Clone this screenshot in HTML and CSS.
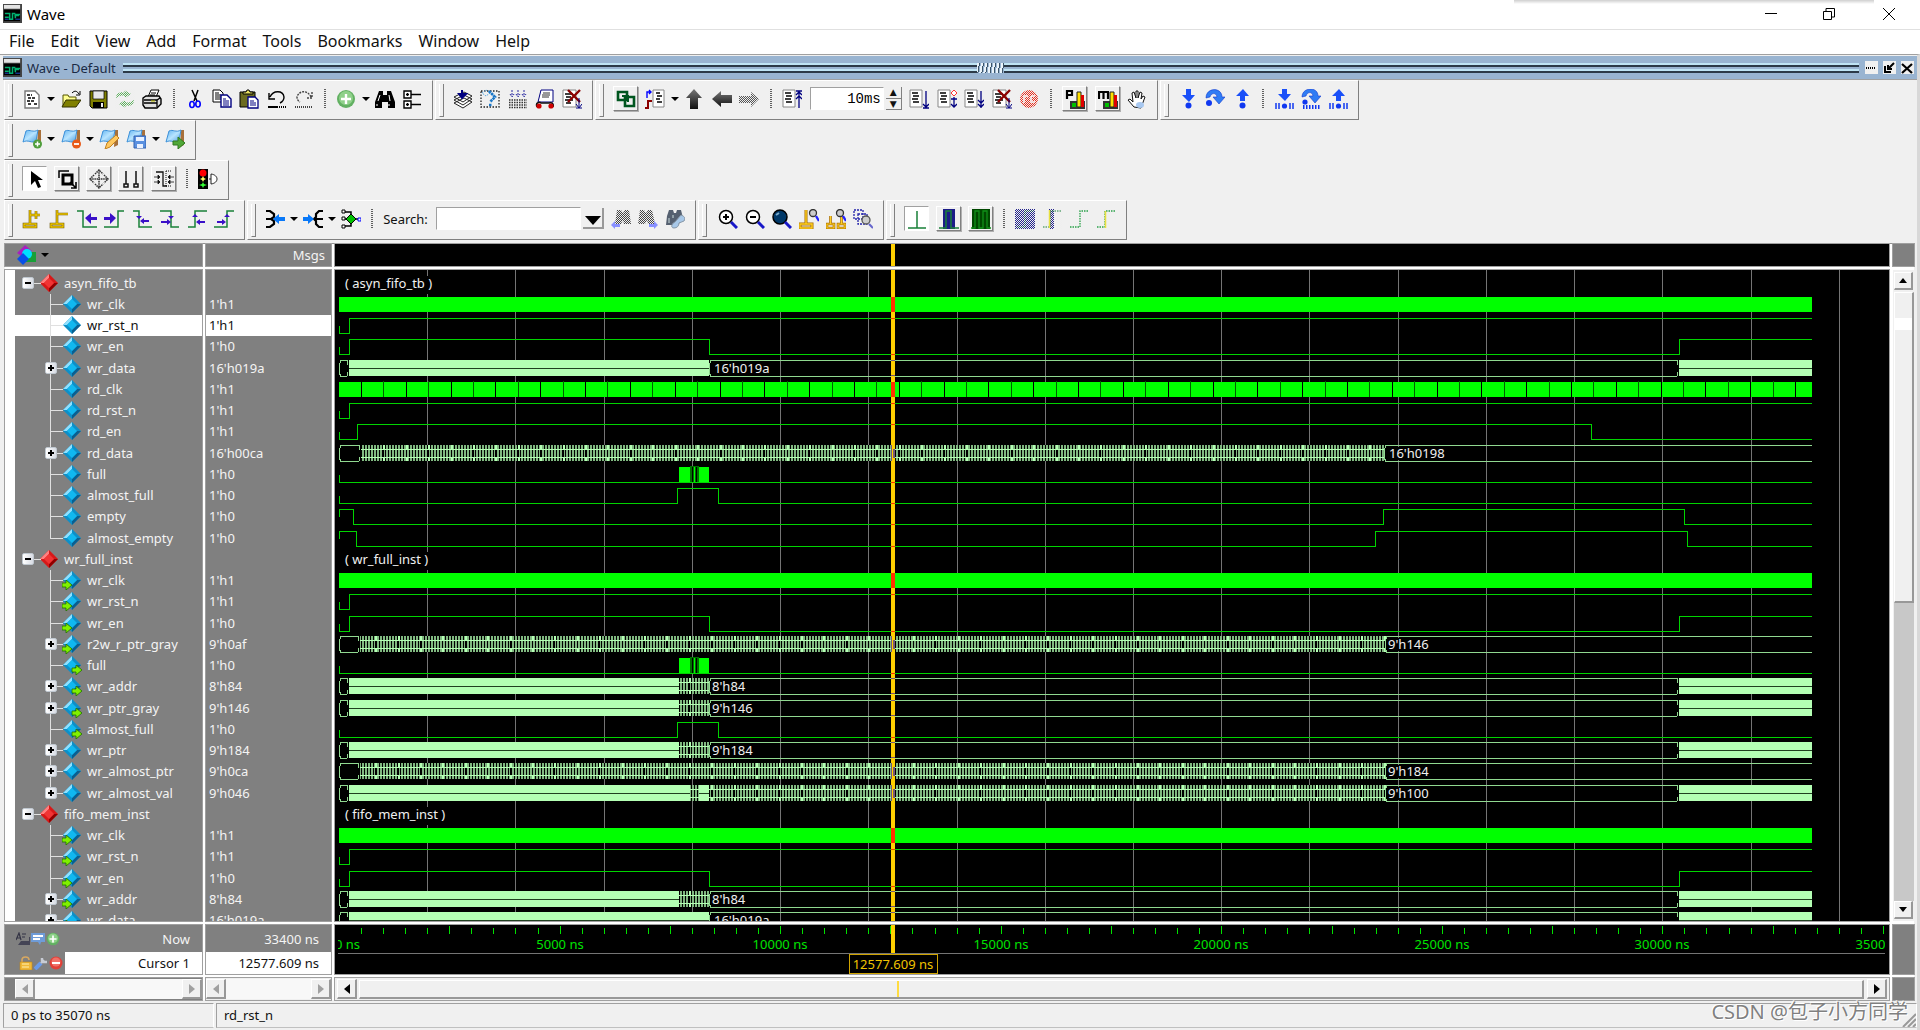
FILE: index.html
```html
<!DOCTYPE html>
<html lang="en">
<head>
<meta charset="utf-8">
<title>Wave</title>
<link rel="stylesheet" href="styles.css">
</head>
<body>
<svg class="sprite" aria-hidden="true">
  <defs>
    <pattern id="chk" width="2" height="2" patternUnits="userSpaceOnUse"><path d="M0 0h1v1h-1zM1 1h1v1h-1z" fill="#efefef"/></pattern>
    <linearGradient id="gArrow" x2="0" y2="1"><stop offset="0" stop-color="#777"/><stop offset="1" stop-color="#111"/></linearGradient>
    <linearGradient id="gFlag" x2="1" y2="1"><stop offset="0" stop-color="#5cb0f0"/><stop offset=".5" stop-color="#b8e4ff"/><stop offset="1" stop-color="#4a9ee0"/></linearGradient>
  </defs>
  <symbol id="app" viewBox="0 0 20 20"><path d="M0 0h20v20h-20z" fill="#444"/><path d="M1 1h17v4h-17z" fill="#e4e4e4"/><path d="M1 6h17v12h-17z" fill="#000"/><path d="M2 10h5v6h3v-6h3M13 15v-4h5M2 14h4M12 12h5" stroke="#00b070" fill="none" stroke-width="1.6"/><path d="M2 16h4M13 16h5" stroke="#2050d0"/></symbol>
  <symbol id="doc" viewBox="0 0 20 20"><path d="M3 2h10l4 4v13h-14z" fill="#fff" stroke="#777" stroke-width="1.4"/><path d="M5 6h5M6 9h7M5 12h8M6 15h4M12 15h3" stroke="#000" stroke-width="1.5" stroke-dasharray="3 1"/></symbol>
  <symbol id="open" viewBox="0 0 20 20"><path d="M2 17v-11h5l1 2h7v3" fill="#ffff90" stroke="#555500"/><path d="M1 18l4-7h15l-5 7z" fill="#808000" stroke="#333300"/><path d="M11 4c3-3 5-2 7 1M19 2v4h-4" fill="none" stroke="#000"/></symbol>
  <symbol id="save" viewBox="0 0 20 20"><path d="M2 2h17v17h-15l-2-2z" fill="#808000" stroke="#000"/><path d="M5 2h11v8h-11z" fill="#e8e8e8" stroke="#000" stroke-width=".7"/><path d="M5 13h11v6h-11z" fill="#000"/><path d="M13 14h2v4h-2z" fill="#eee"/></symbol>
  <symbol id="reload" viewBox="0 0 20 20"><path d="M1 9c0-5 5-7 9-5l-1-3 7 4-6 4v-2c-4-1-6 0-9 2zM19 11c0 5-5 7-9 5l1 3-7-4 6-4v2c4 1 6 0 9-2z" fill="#5aae5a"/><path d="M0 0h20v20h-20z" fill="url(#chk)"/></symbol>
  <symbol id="print" viewBox="0 0 20 20"><path d="M6 8l3-7h8l-3 7z" fill="#fff" stroke="#000"/><path d="M9 4h5M8 6h5" stroke="#000"/><path d="M1 9l3-2h13l2 3v5l-4 4h-12l-2-3z" fill="#e0e0e0" stroke="#000" stroke-width="1.4"/><path d="M2 11h13l3-2M2 14h13M15 11v7" stroke="#000" fill="none" stroke-width="1.3"/><path d="M9 12h4" stroke="#c0c000"/></symbol>
  <symbol id="cut" viewBox="0 0 20 20"><path d="M7 1l5 11M13 1l-4 11" stroke="#000" stroke-width="1.5"/><g fill="none" stroke="#0000ff" stroke-width="1.6"><ellipse cx="7" cy="15.500" rx="2.200" ry="3"/><ellipse cx="13" cy="15" rx="2.200" ry="3"/></g></symbol>
  <symbol id="copy" viewBox="0 0 20 20"><path d="M1 1h7l3 3v9h-10z" fill="#fff" stroke="#000"/><path d="M3 4h4M3 6h6M3 8h6M3 10h6" stroke="#000"/><path d="M9 6h6l4 4v8h-10z" fill="#fff" stroke="#000080" stroke-width="1.400"/><path d="M11 10h3M11 12h6M11 14h6M11 16h6" stroke="#000080"/></symbol>
  <symbol id="paste" viewBox="0 0 20 20"><path d="M1 3h15v15h-15z" fill="#6b6b20" stroke="#000"/><path d="M4 5v-2h3l1-2h2l1 2h3v2z" fill="#e8e060" stroke="#000"/><path d="M9 8h7l3 3v8h-10z" fill="#fff" stroke="#000080" stroke-width="1.300"/><path d="M11 12h4M11 14h6M11 16h6" stroke="#000080"/></symbol>
  <symbol id="undo" viewBox="0 0 20 20"><path d="M3 8c3-7 13-7 14 0 0 3-2 5-4 6M2 4v6h6" fill="none" stroke="#000" stroke-width="1.400"/><path d="M1 18h10" stroke="#000" stroke-width="2"/><path d="M12 18h7" stroke="#000" stroke-width="2" stroke-dasharray="1 1"/></symbol>
  <symbol id="redo" viewBox="0 0 20 20"><path d="M17 8c-3-7-12-7-14 0 0 2 1 4 3 5M18 3v6h-6" fill="none" stroke="#444" stroke-width="1.400" stroke-dasharray="2 1"/><path d="M1 18h18" stroke="#444" stroke-width="2" stroke-dasharray="1 1"/></symbol>
  <symbol id="plus" viewBox="0 0 20 20"><circle cx="10" cy="10" r="9" fill="#62b062"/><circle cx="10" cy="9" r="7" fill="#8fd08a"/><path d="M10 5v10M5 10h10" stroke="#fff" stroke-width="2.400"/></symbol>
  <symbol id="bino" viewBox="0 0 20 20"><path d="M4 2h4v4h4v-4h4l4 11v6h-7v-6h-6v6h-7v-6z" fill="#000"/><path d="M5 6l-2 6M14 6l1 6M2 15v2M14 15v2" stroke="#fff"/></symbol>
  <symbol id="tree" viewBox="0 0 20 20"><path d="M2 2h7v7h-7zM2 12h7v7h-7z" fill="#fff" stroke="#000" stroke-width="1.400"/><path d="M4 5.500h3M5.500 4v3M4 15.500h3M5.500 14v3M9 5.500h10M9 15.500h10" stroke="#000" stroke-width="1.300"/></symbol>
  <symbol id="stack" viewBox="0 0 20 20"><path d="M1 14l9 5 9-6-8-4zM1 11l9 5 9-6-8-4zM1 8l9 5 9-6-8-4z" fill="#fff" stroke="#222"/><path d="M9 1v6M6 5l3 4 4-4z" stroke="#000080" stroke-width="2" fill="#000080"/></symbol>
  <symbol id="ask" viewBox="0 0 20 20"><path d="M1 2h18v16h-18z" fill="none" stroke="#222" stroke-width="1.300" stroke-dasharray="1.500 1.500"/><path d="M2 4l4-3 4 3-4 3z" fill="none" stroke="#5aa8e0" stroke-dasharray="1.500 1"/><path d="M9 2l6 6-5 5M9 16h3" fill="none" stroke="#1c78c8" stroke-width="2.600" stroke-dasharray="2.500 .6"/></symbol>
  <symbol id="grid" viewBox="0 0 20 20"><path d="M1 11h18M1 13.500h18M1 16h18M1 18.500h18" stroke="#333" stroke-width="1.300" stroke-dasharray="1.500 1"/><path d="M4 1v6M10 1v6M16 1v6M2 5l2 3 2-3M8 5l2 3 2-3M14 5l2 3 2-3" stroke="#2828a0" fill="none" stroke-dasharray="2 1"/></symbol>
  <symbol id="carDoc" viewBox="0 0 20 20"><path d="M6 1h12v12h-15z" fill="#fff" stroke="#000080"/><path d="M8 4h7M7 6h8M7 8h7" stroke="#333"/><path d="M2 18c-2-5 3-5 4-4h8c3-1 5 1 4 4" fill="none" stroke="#111" stroke-width="1.500"/><circle cx="4" cy="17" r="2.600" fill="#d00000"/><circle cx="16" cy="17" r="2.600" fill="#d00000"/></symbol>
  <symbol id="runX" viewBox="0 0 20 20"><path d="M1 1h13v17h-13z" fill="#fff" stroke="#888"/><path d="M3 5h8M4 8h5M3 11h8M4 14h5" stroke="#000" stroke-width="1.500"/><path d="M6 1l12 12M18 1l-12 12" stroke="#8b0000" stroke-width="2.400"/><path d="M17 9v9M14 15l3 4 3-4M14 19h6" stroke="#000080" fill="none"/></symbol>
  <symbol id="link" viewBox="0 0 20 20"><path d="M2 3h9v8h-9zM9 8h9v9h-9z" fill="none" stroke="#00561f" stroke-width="2.600"/><path d="M6 7h6v6" fill="none" stroke="#00561f" stroke-width="2"/></symbol>
  <symbol id="sigDoc" viewBox="0 0 20 20"><path d="M8 1h11v17h-11z" fill="#fff" stroke="#888"/><path d="M11 4h4M12 7h5M11 10h4M12 13h5" stroke="#000" stroke-width="1.500"/><path d="M2 9v-6h4M4 1l2 2-2 2" stroke="#0000ff" fill="none" stroke-width="1.400"/><path d="M0 19h3v-7h4" stroke="#8b0000" fill="none" stroke-width="2"/></symbol>
  <symbol id="up" viewBox="0 0 20 20"><path d="M10 0l8 9h-4v11h-8v-11h-4z" fill="url(#gArrow)"/></symbol>
  <symbol id="left" viewBox="0 0 20 20"><path d="M0 10l9-8v4h11v8h-11v4z" fill="url(#gArrow)"/></symbol>
  <symbol id="right" viewBox="0 0 20 20"><path d="M20 10l-8-7v4h-12v7h12v4z" fill="#555"/><path d="M0 0h20v20h-20z" fill="url(#chk)"/></symbol>
  <symbol id="restart" viewBox="0 0 20 20"><path d="M1 1h12v17h-12z" fill="#fff" stroke="#888"/><path d="M3 4h6M4 7h6M3 10h6M4 13h6" stroke="#000" stroke-width="1.500"/><path d="M17 2v17M14 2h6M14 6l3-3 3 3M14 10l3-3 3 3" stroke="#000080" fill="none" stroke-width="1.300"/></symbol>
  <symbol id="run1" viewBox="0 0 20 20"><path d="M1 1h12v17h-12z" fill="#fff" stroke="#888"/><path d="M3 4h6M4 7h6M3 10h6M4 13h6" stroke="#000" stroke-width="1.500"/><path d="M17 2v16M14 15l3 3 3-3M14 19h6" stroke="#000080" fill="none" stroke-width="1.300"/></symbol>
  <symbol id="run2" viewBox="0 0 20 20"><path d="M1 1h12v17h-12z" fill="#fff" stroke="#888"/><path d="M3 4h6M4 7h6M3 10h6M4 13h6" stroke="#000" stroke-width="1.500"/><path d="M17 8v10M14 10h6M14 15l3 3 3-3" stroke="#000080" fill="none" stroke-width="1.300"/><path d="M17 1l3 3-3 3-3-3z" fill="#fff" stroke="#f33"/></symbol>
  <symbol id="run3" viewBox="0 0 20 20"><path d="M1 1h12v17h-12z" fill="#fff" stroke="#888"/><path d="M3 4h6M4 7h6M3 10h6M4 13h6" stroke="#000" stroke-width="1.500"/><path d="M17 2v17M14 11l3 3 3-3M14 15l3 3 3-3" stroke="#000080" fill="none" stroke-width="1.300"/></symbol>
  <symbol id="stop" viewBox="0 0 20 20"><circle cx="10" cy="10" r="9" fill="#e83020"/><path d="M5 7h4M5 7v7M12 7h4M12 7v6h4" stroke="#fff" stroke-width="1.500" fill="none"/><path d="M0 0h20v20h-20z" fill="url(#chk)"/></symbol>
  <symbol id="profP" viewBox="0 0 20 20"><path d="M2 10v-8h5v4h-5" stroke="#000" stroke-width="2.200" fill="none"/><path d="M5 12h15v8h-15z" fill="#333"/><path d="M7 14h4v4h-4z" fill="#00c000"/><path d="M12 3h4v15h-4z" fill="#ffe000" stroke="#222"/><path d="M16 6h3v12h-3z" fill="#e00000"/></symbol>
  <symbol id="profM" viewBox="0 0 20 20"><path d="M1 10v-7h9v7M5.500 3v7" stroke="#000" stroke-width="2.200" fill="none"/><path d="M5 12h15v8h-15z" fill="#333"/><path d="M7 14h4v4h-4z" fill="#00c000"/><path d="M12 3h4v15h-4z" fill="#ffe000" stroke="#222"/><path d="M16 6h3v12h-3z" fill="#e00000"/></symbol>
  <symbol id="hand" viewBox="0 0 20 20"><path d="M7 18l-6-7 2-1 3 3-1-9 2-1 2 6v-7h2v7l2-6 2 1-1 6 2-3 2 1-3 8-1 3z" fill="#fff" stroke="#111"/><ellipse cx="13" cy="16" rx="4" ry="3" fill="#a8c8f0"/></symbol>
  <symbol id="stepIn" viewBox="0 0 20 20"><path d="M8 0h5v6h4l-6 7-7-7h4z" fill="#1a50f8"/><circle cx="10.500" cy="16.500" r="3" fill="#1038f0"/></symbol>
  <symbol id="stepOver" viewBox="0 0 20 20"><path d="M1 9c0-11 16-11 16-1h3l-6 7-6-7h4c-1-5-6-4-7 0z" fill="#2f7cf4" stroke="#1038d0" stroke-width=".6"/><circle cx="4" cy="14" r="3" fill="#1038f0"/></symbol>
  <symbol id="stepOut" viewBox="0 0 20 20"><path d="M8 12h5v-5h4l-6-7-7 7h4z" fill="#1a50f8"/><circle cx="10.500" cy="16.500" r="3" fill="#1038f0"/></symbol>
  <symbol id="inBars" viewBox="0 0 20 20"><path d="M8 0h5v5h4l-6 7-7-7h4z" fill="#1a50f8"/><circle cx="10.500" cy="17" r="2.600" fill="#1038f0"/><path d="M2 14v6M5 14v6M16 14v6M19 14v6" stroke="#1038f0" stroke-width="1.500"/></symbol>
  <symbol id="overBars" viewBox="0 0 20 20"><path d="M1 8c0-10 16-11 16-1h3l-6 7-6-7h4c-1-5-6-4-7 0z" fill="#2f7cf4" stroke="#1038d0" stroke-width=".6"/><circle cx="4" cy="13" r="2.600" fill="#1038f0"/><path d="M2 18h18" stroke="#1038f0" stroke-width="4" stroke-dasharray="1.500 1.500"/></symbol>
  <symbol id="outBars" viewBox="0 0 20 20"><path d="M8 12h5v-5h4l-6-7-7 7h4z" fill="#1a50f8"/><circle cx="10.500" cy="17" r="2.600" fill="#1038f0"/><path d="M2 14v6M5 14v6M16 14v6M19 14v6" stroke="#1038f0" stroke-width="1.500"/></symbol>
  <symbol id="flag" viewBox="0 0 20 20"><path d="M16 1h3v15l-4 2z" fill="#a8703a"/><path d="M4 2c4-2 7 2 12-1l-2 11c-4 3-8-2-13 1z" fill="url(#gFlag)" stroke="#3c90d8"/></symbol>
  <symbol id="flagAdd" viewBox="0 0 20 20"><use href="#flag"/><circle cx="15.500" cy="15" r="4.500" fill="#4f9e3c"/><path d="M15.500 12.500v5M13 15h5" stroke="#fff" stroke-width="1.500"/></symbol>
  <symbol id="flagDel" viewBox="0 0 20 20"><use href="#flag"/><circle cx="15.500" cy="15" r="4.500" fill="#e85a18"/><path d="M13 15h5" stroke="#fff" stroke-width="1.800"/></symbol>
  <symbol id="flagEdit" viewBox="0 0 20 20"><use href="#flag"/><path d="M6 20l2-6 9-8 3 3-9 9z" fill="#ffc860" stroke="#c08020"/></symbol>
  <symbol id="flagSave" viewBox="0 0 20 20"><use href="#flag"/><path d="M8 7h12v12h-12z" fill="#5a90e0" stroke="#3060b0"/><path d="M10 8h8v4h-8zM11 15h6v4h-6z" fill="#e8f0ff"/></symbol>
  <symbol id="flagGo" viewBox="0 0 20 20"><use href="#flag"/><path d="M8 12h5v-4l7 6-7 6v-4h-5z" fill="#50a838" stroke="#307820"/></symbol>
  <symbol id="cursor" viewBox="0 0 20 20"><path d="M6 2v14l4-4 3 7 3-1-3-7h5z" fill="#000"/></symbol>
  <symbol id="zoomBox" viewBox="0 0 20 20"><path d="M2 9v-7h10" fill="none" stroke="#000" stroke-width="1.500"/><path d="M6 6h9v9h-9z" fill="none" stroke="#000" stroke-width="3"/><path d="M14 19h5v-6M13 13l6 6" stroke="#000" stroke-width="1.600" fill="none"/></symbol>
  <symbol id="pan" viewBox="0 0 20 20"><path d="M10 1v18M1 10h18M6 5l4-4 4 4M6 15l4 4 4-4M5 6l-4 4 4 4M15 6l4 4-4 4" fill="none" stroke="#333" stroke-width="1.500" stroke-dasharray="1.500 .7"/></symbol>
  <symbol id="twoCur" viewBox="0 0 20 20"><path d="M5 2v13M15 2v13M3 15h4v3h-4zM13 15h4v3h-4z" fill="none" stroke="#111" stroke-width="1.500"/></symbol>
  <symbol id="editW" viewBox="0 0 20 20"><path d="M2 3h7v14h4" fill="none" stroke="#111" stroke-width="1.300"/><path d="M0 8h5M0 13h5M20 8h-5M20 13h-5M4 6v4l2-2zM4 11v4l2-2zM16 6v4l-2-2zM16 11v4l-2-2z" stroke="#111" fill="#111" stroke-width=".8"/><path d="M12 2h5M12 2v16M12 17h6" stroke="#111" stroke-dasharray="1 1"/></symbol>
  <symbol id="traffic" viewBox="0 0 20 20"><path d="M0 0h10v20h-10z" fill="#000"/><circle cx="5" cy="4" r="3.500" fill="#f00"/><path d="M5 7l1 2 2 1-2 1-1 2-1-2-2-1 2-1z" fill="#ff6"/><path d="M5 13l1 2 3 1-3 1-1 2-1-2-3-1 3-1z" fill="#3f3"/><path d="M11 10h2M13 5c8 1 8 9 0 10z" fill="#fff" stroke="#222"/></symbol>
  <symbol id="curAdd" viewBox="0 0 20 20"><path d="M2 15h12v3h-12zM8 15v-14M8 6h10M14 2v8" fill="none" stroke="#6a5400" stroke-width="2.600"/><path d="M2 15h12v3h-12zM8 15v-14M8 6h10M14 2v8" fill="none" stroke="#f0c800" stroke-width="1.400"/></symbol>
  <symbol id="curDel" viewBox="0 0 20 20"><path d="M2 15h12v3h-12zM8 15v-14M8 5h11" fill="none" stroke="#6a5400" stroke-width="2.600"/><path d="M2 15h12v3h-12zM8 15v-14M8 5h11" fill="none" stroke="#f0c800" stroke-width="1.400"/></symbol>
  <symbol id="prevT" viewBox="0 0 20 20"><path d="M0 2h6v16h14" fill="none" stroke="#188038" stroke-width="1.500"/><path d="M8 9l6-5v4h6v3h-6v4z" fill="#3a10c8"/></symbol>
  <symbol id="nextT" viewBox="0 0 20 20"><path d="M0 18h14v-16h6" fill="none" stroke="#188038" stroke-width="1.500"/><path d="M12 9l-6-5v4h-6v3h6v4z" fill="#3a10c8"/></symbol>
  <symbol id="prevF" viewBox="0 0 20 20"><path d="M1 2h6v16h13" fill="none" stroke="#188038" stroke-width="1.500"/><path d="M4 7h6l-3 3zM8 12l4-3v2h5v2h-5v2z" fill="#3a10c8"/></symbol>
  <symbol id="nextF" viewBox="0 0 20 20"><path d="M1 2h11v16h8" fill="none" stroke="#188038" stroke-width="1.500"/><path d="M9 7h6l-3 3zM12 13l-4-3v2h-6v2h6v2z" fill="#3a10c8"/></symbol>
  <symbol id="prevR" viewBox="0 0 20 20"><path d="M1 18h7v-16h12" fill="none" stroke="#188038" stroke-width="1.500"/><path d="M5 8h6l-3-3zM9 13l4-3v2h5v2h-5v2z" fill="#3a10c8"/></symbol>
  <symbol id="nextR" viewBox="0 0 20 20"><path d="M0 18h13v-16h7" fill="none" stroke="#188038" stroke-width="1.500"/><path d="M10 8h6l-3-3zM12 13l-4-3v2h-5v2h5v2z" fill="#3a10c8"/></symbol>
  <symbol id="joinL" viewBox="0 0 20 20"><path d="M1 2h4l4 3v3l-3 2 3 2v3l-4 3h-4M1 10h6" fill="none" stroke="#000" stroke-width="2.200"/><path d="M8 10l6-5v3h6v4h-6v3z" fill="#0878f8"/></symbol>
  <symbol id="joinR" viewBox="0 0 20 20"><path d="M20 2h-4l-3 3v3l-2 2 2 2v3l3 3h4M12 10h8" fill="none" stroke="#000" stroke-width="2.200"/><path d="M11 10l-6-5v3h-5v4h5v3z" fill="#0878f8"/></symbol>
  <symbol id="joinAll" viewBox="0 0 20 20"><path d="M3 3h7v14h-7M3 10h14" fill="none" stroke="#000" stroke-width="1.500"/><path d="M1 1h3v3h-3zM1 8h3v3h-3zM1 16h3v3h-3z" fill="#fff" stroke="#000"/><path d="M10 5l5 5-5 5-5-5z" fill="#00c000" stroke="#000"/><path d="M17 9h3v3h-3z" fill="#fff" stroke="#00f"/></symbol>
  <symbol id="binoL" viewBox="0 0 20 20"><path d="M6 1h4l2 3 2-3h4l2 14h-7l-1-4-2 4h-6z" fill="#444"/><path d="M0 0h20v20h-20z" fill="url(#chk)"/><path d="M0 16l4-4v3h5v3h-5v2z" fill="#8890ff"/></symbol>
  <symbol id="binoR" viewBox="0 0 20 20"><path d="M2 1h4l2 3 2-3h4l3 14h-7l-1-4-2 4h-7z" fill="#444"/><path d="M0 0h20v20h-20z" fill="url(#chk)"/><path d="M20 16l-4-4v3h-5v3h5v2z" fill="#8890ff"/></symbol>
  <symbol id="binoW" viewBox="0 0 20 20"><path d="M4 1h4l1 3h2l1-3h4l2 8-5 7h-12l1-9z" fill="#556070"/><path d="M4 9v5M8 6v3" stroke="#cdd"/><path d="M9 19c-4 0-2-5 1-6l6-7c3 1 5 3 3 6l-5 2c0 3-2 5-5 5z" fill="#a8c8e8" stroke="#8898a8"/></symbol>
  <symbol id="zin" viewBox="0 0 20 20"><circle cx="8" cy="8" r="6.500" fill="#fff" stroke="#000" stroke-width="1.500"/><path d="M8 5v6M5 8h6" stroke="#000" stroke-width="2"/><path d="M13 13l6 6" stroke="#1818c8" stroke-width="3"/></symbol>
  <symbol id="zout" viewBox="0 0 20 20"><circle cx="8" cy="8" r="6.500" fill="#fff" stroke="#000" stroke-width="1.500"/><path d="M5 8h6" stroke="#000" stroke-width="2"/><path d="M13 13l6 6" stroke="#1818c8" stroke-width="3"/></symbol>
  <symbol id="zfull" viewBox="0 0 20 20"><circle cx="8" cy="8" r="7" fill="#003868" stroke="#000" stroke-width="1.500"/><path d="M4 6l3-2" stroke="#7ac" stroke-width="2"/><path d="M13 13l6 6" stroke="#1818c8" stroke-width="3"/></symbol>
  <symbol id="zcur" viewBox="0 0 20 20"><path d="M1 15h12v4h-12zM7 15v-14" fill="none" stroke="#a86c00" stroke-width="3"/><path d="M1 15h12v4h-12zM7 15v-14" fill="none" stroke="#ffd020" stroke-width="1.400"/><circle cx="14" cy="4" r="3.500" fill="#ccc" stroke="#333" stroke-width="1.300"/><path d="M17 7l3 5" stroke="#22f" stroke-width="2.400"/></symbol>
  <symbol id="ztwo" viewBox="0 0 20 20"><path d="M1 15h7v4h-7zM4.500 15v-8M12 15h7v4h-7zM15.500 15v-8" fill="none" stroke="#a86c00" stroke-width="2.600"/><path d="M1 15h7v4h-7zM4.500 15v-8M12 15h7v4h-7zM15.500 15v-8" fill="none" stroke="#ffd020" stroke-width="1.200"/><circle cx="14" cy="4" r="3.500" fill="#ccc" stroke="#333" stroke-width="1.300"/><path d="M17 7l3 5" stroke="#22f" stroke-width="2.400"/></symbol>
  <symbol id="zsel" viewBox="0 0 20 20"><path d="M1 1h9v9h-9zM5 5h9v10h-9z" fill="none" stroke="#22a" stroke-width="1.300" stroke-dasharray="2 1"/><circle cx="13" cy="11" r="4" fill="#ccc" stroke="#555" stroke-width="1.300"/><path d="M16 15l4 4" stroke="#66c" stroke-width="2.200"/></symbol>
  <symbol id="exp1" viewBox="0 0 20 20"><path d="M1 19h18M10 19v-17" stroke="#188038" fill="none" stroke-width="1.500"/></symbol>
  <symbol id="exp2" viewBox="0 0 20 20"><path d="M4 0h12v20h-12z" fill="#1c1c88"/><path d="M0 19h7v-17h5v17h8" stroke="#188038" fill="none" stroke-width="1.500"/></symbol>
  <symbol id="exp3" viewBox="0 0 20 20"><path d="M1 0h18v20h-18z" fill="#004800"/><path d="M0 19h4v-17h4v17h4v-17h4v17h4" stroke="#109018" fill="none" stroke-width="1.300"/></symbol>
  <symbol id="m1" viewBox="0 0 20 20"><path d="M0 0h20v20h-20z" fill="#24248c"/><path d="M2 18h8v-16h9" stroke="#188038" fill="none"/><path d="M0 0h20v20h-20z" fill="url(#chk)"/></symbol>
  <symbol id="m2" viewBox="0 0 20 20"><path d="M7 0h5v20h-5z" fill="#24248c"/><path d="M0 0h20v20h-20z" fill="url(#chk)"/><path d="M1 18h7v-16h12" stroke="#188038" fill="none" stroke-dasharray="1.500 1"/><path d="M7.500 1v18" stroke="#e8e040" stroke-width="1.500"/></symbol>
  <symbol id="m3" viewBox="0 0 20 20"><path d="M1 18h10v-16h8" stroke="#28a048" fill="none" stroke-dasharray="1.500 1" stroke-width="1.300"/></symbol>
  <symbol id="m4" viewBox="0 0 20 20"><path d="M1 18h8v-16h10" stroke="#28a048" fill="none" stroke-dasharray="1.500 1" stroke-width="1.300"/><path d="M9.500 2v17" stroke="#e8e040" stroke-width="1.500"/></symbol>
  <symbol id="gemBlue" viewBox="0 0 20 20"><path d="M10 1l9 9-9 9-9-9z" fill="#0d8fc8"/><path d="M1 10l9-9v4l-5 5z" fill="#8fe0ff"/><path d="M10 19l9-9h-4l-5 5z" fill="#0a5f90"/><path d="M10 5l5 5-5 5-5-5z" fill="#10b8f0"/></symbol>
  <symbol id="gemRed" viewBox="0 0 20 20"><path d="M10 1l9 9-9 9-9-9z" fill="#d81818"/><path d="M1 10l9-9v4l-5 5z" fill="#ff8080"/><path d="M10 19l9-9h-4l-5 5z" fill="#900000"/><path d="M10 5l5 5-5 5-5-5z" fill="#f03434"/></symbol>
  <symbol id="gemIn" viewBox="0 0 20 20"><use href="#gemBlue"/><path d="M0 13h4v-3l6 5-6 5v-3h-4z" fill="#80f000" stroke="#207000" stroke-width=".8"/></symbol>
  <symbol id="gemOut" viewBox="0 0 20 20"><use href="#gemBlue"/><path d="M10 13h4v-3l6 5-6 5v-3h-4z" fill="#80f000" stroke="#207000" stroke-width=".8"/></symbol>
  <symbol id="shapes" viewBox="0 0 20 20"><path d="M1 8l8-8 7 6-8 7z" fill="#a820c0"/><path d="M10 7h10v10h-10z" fill="#18a038"/><circle cx="11" cy="9" r="5" fill="#00e0ff"/><path d="M7 8l6 6-6 6-6-6z" fill="#0850e8"/></symbol>
  <symbol id="abc" viewBox="0 0 14 14"><path d="M0 8l3-7 2 7M1 6h4M6 2h4M6 5h3" stroke="#334" fill="none" stroke-width="1.200"/><path d="M2 13l3-4h8v-4h1v8z" fill="#445"/></symbol>
  <symbol id="note" viewBox="0 0 14 14"><path d="M0 1h14v9h-4l-1 3-2-3h-7z" fill="#6f9cd8"/><path d="M2 4h10M2 7h7" stroke="#fff" stroke-width="1.800"/></symbol>
  <symbol id="lock" viewBox="0 0 14 14"><path d="M3 7v-3c0-4 7-4 7 0" fill="none" stroke="#d8a860" stroke-width="1.600"/><path d="M1 6h12v8h-12z" fill="#f0b838" stroke="#c08818" stroke-width=".6"/><path d="M3 8h7M3 11h7" stroke="#fff0b0"/></symbol>
  <symbol id="wrench" viewBox="0 0 14 14"><path d="M1 13l6-6" stroke="#6a9ae8" stroke-width="4"/><path d="M7 7l3-3M8 2v4h5" stroke="#c8ccd4" stroke-width="2.400" fill="none"/></symbol>
  <symbol id="minus" viewBox="0 0 14 14"><circle cx="7" cy="7" r="6.500" fill="#e04038"/><circle cx="7" cy="6" r="4.500" fill="#f07068"/><path d="M3 7h8" stroke="#fff" stroke-width="2"/></symbol>
</svg>

<header class="titlebar">
  <svg class="app-icon"><use href="#app"/></svg>
  <h1>Wave</h1>
  <div class="win-shadow"></div>
  <div class="win-buttons">
    <button aria-label="Minimize"><svg viewBox="0 0 12 12"><path d="M0 5.500h12"/></svg></button>
    <button aria-label="Restore"><svg viewBox="0 0 12 12"><path d="M.5 3.500h8v8h-8zM3 3v-2.500h8.500v8.500h-2.500"/></svg></button>
    <button aria-label="Close"><svg viewBox="0 0 12 12"><path d="M0 0l12 12M12 0l-12 12"/></svg></button>
  </div>
</header>

<nav class="menubar">
  <button>File</button><button>Edit</button><button>View</button><button>Add</button><button>Format</button><button>Tools</button><button>Bookmarks</button><button>Window</button><button>Help</button>
</nav>

<main class="frame">
  <div class="pane-title">
    <svg class="app-icon"><use href="#app"/></svg>
    <h2>Wave - Default</h2>
    <div class="rails"></div>
    <div class="rail-grip"></div>
    <div class="rails"></div>
    <div class="pane-buttons">
      <button aria-label="Drag"><svg viewBox="0 0 12 12"><path d="M1 6h10" stroke="#000" stroke-width="2" stroke-dasharray="1 1"/></svg></button>
      <button aria-label="Undock"><svg viewBox="0 0 12 12"><path d="M2 4v6h6M11 1l-6 6M5 3v4h4" stroke="#000" stroke-width="2" fill="none"/></svg></button>
      <button aria-label="Close pane"><svg viewBox="0 0 12 12"><path d="M1 2l10 9M11 2l-10 9" stroke="#000" stroke-width="2.200"/></svg></button>
    </div>
  </div>

  <div class="toolbars" id="toolbars">
    <div class="bar-row">
      <div class="bar w-file" data-items="doc v open save reload print | cut copy paste undo redo | plus v bino tree"></div>
      <div class="bar w-compile" data-items="stack ask grid carDoc runX"></div>
      <div class="bar w-sim" data-items="+link sigDoc v up left right | restart time run1 run2 run3 runX stop | +profP +profM hand"></div>
      <div class="bar w-step" data-items="stepIn stepOver stepOut | inBars overBars outBars"></div>
    </div>
    <div class="bar-row">
      <div class="bar w-mark" data-items="flagAdd v flagDel v flagEdit flagSave v flagGo"></div>
    </div>
    <div class="bar-row">
      <div class="bar w-mode" data-items="-cursor +zoomBox +pan +twoCur +editW | traffic"></div>
    </div>
    <div class="bar-row">
      <div class="bar w-cursor" data-items="curAdd curDel prevT nextT prevF nextF prevR nextR"></div>
      <div class="bar w-search" data-items="joinL v joinR v joinAll | search binoL binoR binoW"></div>
      <div class="bar w-zoom" data-items="zin zout zfull zcur ztwo zsel"></div>
      <div class="bar w-expand" data-items="-exp1 +exp2 +exp3 | m1 m2 m3 m4"></div>
    </div>
  </div>

  <template id="timeBox">
    <div class="time-box">
      <input type="text" value="10ms" aria-label="Run length">
      <div class="spin"><button aria-label="Increase">▲</button><button aria-label="Decrease">▼</button></div>
    </div>
  </template>
  <template id="searchBox">
    <div class="search-box">
      <label for="q">Search:</label>
      <input type="text" id="q">
      <button class="drop" aria-label="Search history"></button>
    </div>
  </template>

  <section class="wave">
    <div class="cell head names-head"><button class="pick" aria-label="Object filter"><svg class="shapes"><use href="#shapes"/></svg><i class="caret"></i></button></div>
    <div class="cell head msgs">Msgs</div>
    <div class="cell black"><svg id="topStrip" class="fill"></svg></div>
    <div class="cell gray"></div>

    <div class="cell names"><div class="rows" id="names"></div></div>
    <div class="cell gray"><div class="rows" id="values"></div></div>
    <div class="cell black"><svg id="plot" class="fill"></svg></div>
    <div class="vscroll">
      <button class="sb" aria-label="Scroll up"><i class="tri up"></i></button>
      <div class="vtrack"><div class="vthumb"></div></div>
      <button class="sb" aria-label="Scroll down"><i class="tri down"></i></button>
    </div>

    <div class="cell foot">
      <div class="now"><span class="mini"><svg><use href="#abc"/></svg><svg><use href="#note"/></svg><svg><use href="#plus"/></svg></span>Now</div>
      <div class="cur"><span class="mini"><svg><use href="#lock"/></svg><svg><use href="#wrench"/></svg><svg><use href="#minus"/></svg></span><b>Cursor 1</b></div>
    </div>
    <div class="cell foot">
      <div class="now">33400 ns</div>
      <div class="cur"><b>12577.609 ns</b></div>
    </div>
    <div class="cell black"><svg id="ruler" class="fill"></svg></div>
    <div class="cell gray"></div>

    <div class="hscroll off names-scroll"><button class="sb" aria-label="Names left"><i class="tri left"></i></button><div class="htrack"></div><button class="sb" aria-label="Names right"><i class="tri right"></i></button></div>
    <div class="hscroll off"><button class="sb" aria-label="Values left"><i class="tri left"></i></button><div class="htrack"></div><button class="sb" aria-label="Values right"><i class="tri right"></i></button></div>
    <div class="hscroll"><button class="sb" aria-label="Wave left"><i class="tri left"></i></button><div class="hthumb"><i class="mark"></i></div><button class="sb" aria-label="Wave right"><i class="tri right"></i></button></div>
    <div class="cell gray"></div>
  </section>

  <footer class="status">
    <div class="st range">0 ps to 35070 ns</div>
    <div class="st object">rd_rst_n</div>
    <svg class="resize" viewBox="0 0 14 14"><path d="M1 14l13-13M6 14l8-8M11 14l3-3" stroke="#999" stroke-width="2"/></svg>
  </footer>
</main>
<div class="credit">CSDN @包子小方同学</div>
<script src="wave.js"></script>
</body>
</html>
```
FILE: styles.css
```css
* { box-sizing: border-box; }
html, body { height: 100%; }
body {
  margin: 0;
  display: flex;
  flex-direction: column;
  overflow: hidden;
  background: #fff;
  color: #111;
  font: 13px/20px "Noto Sans", "Noto Sans CJK SC", sans-serif;
}
button { margin: 0; padding: 0; border: 0; background: none; font: inherit; color: inherit; }
h1, h2 { margin: 0; font-weight: 400; }
svg { display: block; flex: none; }
.sprite { position: absolute; width: 0; height: 0; }

/* window title and menu */
.titlebar { display: flex; align-items: center; gap: 5px; height: 29px; flex: none; padding: 0 0 2px 3px; position: relative; }
.titlebar h1 { font-size: 15px; color: #000; flex: 1; }
.app-icon { width: 19px; height: 19px; }
.win-shadow { position: absolute; top: 0; right: 46px; width: 360px; height: 4px; background: linear-gradient(#cfcfcf, #fff); }
.win-buttons { display: flex; align-self: stretch; }
.win-buttons button { width: 58px; display: flex; align-items: center; justify-content: center; }
.win-buttons button:last-child { width: 62px; }
.win-buttons svg { width: 12px; height: 12px; fill: none; stroke: #000; }
.menubar { display: flex; align-items: center; gap: 16px; height: 25px; flex: none; padding: 0 0 3px 9px; border-top: 1px solid #e0e0e0; }
.menubar button { font-size: 16px; line-height: 20px; }

/* docked pane */
.frame { flex: 1; min-height: 0; display: flex; flex-direction: column; background: #f0f0f0; border-top: 1px solid #a0a0a0; border-right: 3px solid #d8d8d8; }
.pane-title { display: flex; align-items: center; height: 24px; flex: none; margin: 1px 0 0 3px; background: #99b4d1; border-bottom: 1px solid #a0a0a0; }
.pane-title h2 { font-size: 13px; color: #1a2a44; padding: 0 7px 0 5px; }
.rails { flex: 1; height: 10px; background: linear-gradient(#bfe4f4 0 2px, #2c3a48 2px 4px, #99b4d1 4px 6px, #bfe4f4 6px 8px, #2c3a48 8px 10px); }
.rails:first-of-type { margin-right: 0; }
.rail-grip { width: 27px; height: 10px; background: repeating-linear-gradient(100deg, #eaf4fb 0 2px, #3c5468 2px 3px, #99b4d1 3px 4px); }
.pane-buttons { display: flex; gap: 5px; padding: 0 3px 0 6px; }
.pane-buttons button { width: 13px; height: 13px; background: #f0f0f0; }
.pane-buttons svg { width: 12px; height: 12px; }

.toolbars { flex: none; padding-left: 4px; }
.bar-row { display: flex; gap: 2px; height: 40px; }
.bar {
  display: flex; align-items: center; justify-content: space-between;
  padding: 0 10px 3px 17px; position: relative;
  border: 1px solid #fff; border-right: 1px solid #808080; border-bottom: 1px solid #808080;
}
.bar::before { content: ""; position: absolute; left: 3px; top: 3px; bottom: 2px; width: 3px; border-left: 1px solid #fff; border-right: 1px solid #808080; border-bottom: 1px solid #808080; }
.bar button.ic { width: 20px; height: 20px; }
.bar .ic svg { width: 20px; height: 20px; }
.bar button.ic.raised, .bar button.ic.pressed { width: 25px; height: 25px; padding: 2px; }
.raised { border: 1px solid #fff; border-right-color: #808080; border-bottom-color: #808080; box-shadow: 1px 1px 0 #b0b0b0; }
.pressed { background: #fff; border: 1px solid #a0a0a0; border-right-color: #fff; border-bottom-color: #fff; }
.sep { width: 2px; height: 20px; margin: 0 3px; background: repeating-linear-gradient(#606060 0 1px, #f0f0f0 1px 2px); }
.bar .more { margin: 0 -2px; }
.caret { width: 0; height: 0; border: 4px solid transparent; border-top: 4px solid #000; border-bottom: 0; display: block; }
.w-file { width: 429px; }
.w-compile { width: 158px; }
.w-sim { width: 563px; }
.w-step { width: 199px; }
.w-mark { width: 192px; }
.w-mode { width: 225px; }
.w-cursor { width: 241px; }
.w-search { width: 449px; }
.w-zoom { width: 186px; padding-left: 19px; }
.w-expand { width: 241px; }

.time-box { display: flex; gap: 2px; height: 23px; }
.time-box input { width: 74px; border: 1px solid #a0a0a0; border-right-color: #fff; border-bottom-color: #fff; padding: 0 2px; text-align: right; font: 14px "Liberation Mono", monospace; background: #fff; }
.spin { display: flex; flex-direction: column; width: 16px; }
.spin button { flex: 1; font: 9px/10px "DejaVu Sans", sans-serif; border-right: 1px solid #808080; border-bottom: 1px solid #808080; }
.search-box { display: flex; align-items: center; gap: 2px; }
.search-box label { padding-right: 6px; }
.search-box input { width: 145px; height: 23px; border: 1px solid #a0a0a0; border-right-color: #fff; border-bottom-color: #fff; background: #fff; }
.drop { width: 21px; height: 21px; border-right: 2px solid #999; border-bottom: 2px solid #999; }
.drop::after { content: ""; display: block; margin: 5px 2px 0; border: 8px solid transparent; border-top: 9px solid #000; border-bottom: 0; }

/* wave grid */
.wave {
  flex: 1; min-height: 0; display: grid; gap: 4px; margin: 3px 3px 0 5px; background: #fff;
  grid-template-columns: 197px 125px minmax(0, 1fr) 21px;
  grid-template-rows: 22px minmax(0, 1fr) 49px 22px;
  border-top: 1px solid #909090;
}
.cell { box-shadow: 0 0 0 1px #a0a0a0; overflow: hidden; background: #808080; color: #f4f4f4; min-width: 0; position: relative; }
.cell.black { background: #000; }
.cell.names { background: #fff; }
.fill { position: absolute; left: 0; top: 0; width: 100%; height: 100%; }
.head { line-height: 22px; }
.msgs { text-align: right; padding-right: 6px; }
.pick { display: flex; align-items: center; gap: 5px; height: 22px; padding-left: 11px; }
.shapes { width: 20px; height: 20px; }
.rows { padding-top: 3px; background: #808080; }
.names .rows { margin-left: 10px; }
.row { display: flex; align-items: center; height: 21px; line-height: 18px; padding-bottom: 2px; position: relative; white-space: nowrap; }
.row:nth-child(4n) { height: 22px; }
.row.sel { background: #fff; color: #111; }
.row svg { width: 20px; height: 20px; position: relative; }
.row .name { padding-left: 5px; }
.row .gap { width: 42px; }
.row.leaf .toggle { margin: 0 5px 0 30px; }
.row.leaf .gap { margin-right: 5px; }
.row.group .toggle { margin: 0 5px 0 7px; }
.row.leaf::before { content: ""; position: absolute; left: 35px; top: 0; height: 100%; width: 1px; background: #e0e0e0; }
.row.leaf.last::before { height: 11px; }
.row.leaf::after { content: ""; position: absolute; left: 36px; top: 10px; width: 12px; height: 1px; background: #e0e0e0; }
.row.group::after { content: ""; position: absolute; left: 19px; top: 10px; width: 7px; height: 1px; background: #e0e0e0; }
.toggle { width: 12px; height: 12px; flex: none; position: relative; z-index: 1; border: 1px solid #c0c8d0; border-radius: 2px; background: linear-gradient(90deg, #fff, #d8dce4); }
.toggle::before { content: ""; position: absolute; left: 2px; top: 4px; width: 6px; height: 2px; background: #000; }
.toggle.plus::after { content: ""; position: absolute; left: 4px; top: 2px; width: 2px; height: 6px; background: #000; }
#values .row { padding-left: 3px; }

.foot { display: flex; flex-direction: column; text-align: right; }
.foot .now { display: flex; height: 27px; align-items: center; justify-content: flex-end; padding: 0 12px 0 11px; flex: none; }
.foot .cur { display: flex; flex: 1; }
.foot b { flex: 1; font-weight: 400; background: #fff; color: #111; padding-right: 12px; line-height: 22px; }
.mini { display: flex; align-items: center; gap: 1px; }
.mini svg { width: 14px; height: 14px; }
.now .mini { margin-right: auto; }
.cur .mini { width: 60px; padding-left: 14px; }

.sb { width: 20px; height: 20px; flex: none; display: flex; align-items: center; justify-content: center; background: #f0f0f0; border: 1px solid #fff; border-right: 2px solid #989898; border-bottom: 2px solid #989898; }
.tri { width: 0; height: 0; border: 5px solid transparent; }
.tri.left { border-right: 6px solid #000; border-left: 0; }
.tri.right { border-left: 6px solid #000; border-right: 0; }
.tri.up { border-width: 0 4px 5px; border-bottom-color: #000; }
.tri.down { border-width: 5px 4px 0; border-top-color: #000; }
.off .tri.left { border-right-color: #a0a0a0; }
.off .tri.right { border-left-color: #a0a0a0; }
.hscroll { display: flex; align-items: center; padding: 0 2px; background: #f0f0f0; box-shadow: 0 0 0 1px #a0a0a0; min-width: 0; }
.hscroll.off { padding: 0; }
.hscroll.names-scroll { padding-left: 10px; background: #808080; }
.htrack { flex: 1; height: 20px; background: #f8f8f8; }
.hthumb { flex: 1; height: 19px; margin: 0 3px 0 2px; border: 1px solid #fff; border-right: 2px solid #989898; border-bottom: 2px solid #989898; display: flex; }
.mark { width: 2px; margin-left: calc(36% - 4px); background: #ffdc40; }
.vscroll { display: flex; flex-direction: column; align-items: center; padding: 2px 0; background: #f0f0f0; }
.vscroll .sb { width: 19px; height: 18px; }
.vtrack { flex: 1; width: 20px; background: #c8c8c8; margin: 2px 0 0; }
.vthumb { height: 51%; background: linear-gradient(#f0f0f0 0 25px, #fff 25px 37px, #f0f0f0 37px); border: 1px solid #fff; border-right: 2px solid #989898; border-bottom: 2px solid #989898; }

.status { display: flex; gap: 2px; height: 25px; flex: none; margin: 3px 0 2px 3px; position: relative; }
.st { border: 1px solid #a0a0a0; border-right-color: #fff; border-bottom-color: #c0c0c0; line-height: 22px; padding-left: 7px; }
.range { width: 211px; }
.object { flex: 1; }
.resize { position: absolute; right: 1px; bottom: 1px; width: 14px; height: 14px; }
.credit { position: absolute; right: 12px; bottom: 3px; font-size: 20px; line-height: 30px; color: #808080; text-shadow: 1px 1px 0 #fff, -1px -1px 0 #fff; }

/* traces */
#plot, #ruler, #topStrip { shape-rendering: crispEdges; font-size: 13px; }
.lg { stroke: #00d400; fill: none; }
.clk { fill: #00ff00; }
.solid { fill: #b4ffb4; }
.rail { stroke: #90d890; fill: none; }
.gridline { stroke: #747474; }
.val { fill: #f0f0f0; }
.tick { stroke: #00e000; }
.lab { fill: #00e400; text-anchor: middle; }
.lab.first { text-anchor: end; }
.curs { fill: #ffd000; }
.hit { fill: #ff3000; }
.hitBus { fill: #7a5a78; }
.box { fill: #000; stroke: #d0a400; }
.boxText { fill: #f0c400; text-anchor: middle; }
```
FILE: wave.js
```js
// Toolbars: "+" raised button, "-" pressed button, "v" drop-down caret, "|" separator
document.querySelectorAll('.bar').forEach(bar => {
  bar.dataset.items.split(' ').forEach(item => {
    if (item === '|') { bar.insertAdjacentHTML('beforeend', '<span class="sep"></span>'); return; }
    if (item === 'v') { bar.insertAdjacentHTML('beforeend', '<button class="more" aria-label="More"><i class="caret"></i></button>'); return; }
    if (item === 'time') { bar.append(document.getElementById('timeBox').content.cloneNode(true)); return; }
    if (item === 'search') { bar.append(document.getElementById('searchBox').content.cloneNode(true)); return; }
    const kind = item[0] === '+' ? ' raised' : item[0] === '-' ? ' pressed' : '';
    const id = item.replace(/^[+-]/, '');
    bar.insertAdjacentHTML('beforeend', `<button class="ic${kind}" aria-label="${id}"><svg><use href="#${id}"/></svg></button>`);
  });
});

const END = 33400, SPAN = 35070, CURSOR = 12577.609;
const W_OFF = 8397, W_ON = 30387;
const rst = [[0, 0], [222, 1]];
const wen = [[0, 0], [222, 1], [W_OFF, 0], [W_ON, 1]];
const afull = [[0, 0], [7664, 1], [8600, 0]];
const wrBus = v => [['x', 0, 222], ['s', 222, 7710], ['h', 7710, W_OFF], ['v', W_OFF, W_ON, v], ['s', W_ON, END]];
const rdBus = v => [['x', 0, 475], ['h', 475, 23710], ['v', 23710, END, v]];
const dataBus = [['x', 0, 222], ['s', 222, W_OFF], ['v', W_OFF, W_ON, "16'h019a"], ['s', W_ON, END]];

// name, value, icon, expandable, trace type, trace data
const signals = [
  ['asyn_fifo_tb', '', 'group'],
  ['wr_clk', "1'h1", 'gemBlue', 0, 'clk'],
  ['wr_rst_n', "1'h1", 'gemBlue', 0, 'bit', rst],
  ['wr_en', "1'h0", 'gemBlue', 0, 'bit', wen],
  ['wr_data', "16'h019a", 'gemBlue', 1, 'bus', dataBus],
  ['rd_clk', "1'h1", 'gemBlue', 0, 'slow'],
  ['rd_rst_n', "1'h1", 'gemBlue', 0, 'bit', rst],
  ['rd_en', "1'h1", 'gemBlue', 0, 'bit', [[0, 0], [419, 1], [28380, 0]]],
  ['rd_data', "16'h00ca", 'gemBlue', 1, 'bus', [['x', 0, 498], ['h', 498, 23683], ['v', 23683, END, "16'h0198"]]],
  ['full', "1'h0", 'gemBlue', 0, 'full'],
  ['almost_full', "1'h0", 'gemBlue', 0, 'bit', afull],
  ['empty', "1'h0", 'gemBlue', 0, 'bit', [[0, 1], [328, 0], [23658, 1], [30500, 0]]],
  ['almost_empty', "1'h0", 'gemBlue', 0, 'bit', [[0, 1], [390, 0], [23490, 1], [30570, 0]]],
  ['wr_full_inst', '', 'group'],
  ['wr_clk', "1'h1", 'gemIn', 0, 'clk'],
  ['wr_rst_n', "1'h1", 'gemIn', 0, 'bit', rst],
  ['wr_en', "1'h0", 'gemIn', 0, 'bit', wen],
  ['r2w_r_ptr_gray', "9'h0af", 'gemIn', 1, 'bus', rdBus("9'h146")],
  ['full', "1'h0", 'gemOut', 0, 'full'],
  ['wr_addr', "8'h84", 'gemOut', 1, 'bus', wrBus("8'h84")],
  ['wr_ptr_gray', "9'h146", 'gemOut', 1, 'bus', wrBus("9'h146")],
  ['almost_full', "1'h0", 'gemOut', 0, 'bit', afull],
  ['wr_ptr', "9'h184", 'gemBlue', 1, 'bus', wrBus("9'h184")],
  ['wr_almost_ptr', "9'h0ca", 'gemBlue', 1, 'bus', rdBus("9'h184")],
  ['wr_almost_val', "9'h046", 'gemBlue', 1, 'bus', [['x', 0, 222], ['s', 222, 7953], ['h', 7953, 8163], ['s', 8163, W_OFF], ['h', W_OFF, 23710], ['v', 23710, W_ON, "9'h100"], ['s', W_ON, END]]],
  ['fifo_mem_inst', '', 'group'],
  ['wr_clk', "1'h1", 'gemIn', 0, 'clk'],
  ['wr_rst_n', "1'h1", 'gemIn', 0, 'bit', rst],
  ['wr_en', "1'h0", 'gemIn', 0, 'bit', wen],
  ['wr_addr', "8'h84", 'gemIn', 1, 'bus', wrBus("8'h84")],
  ['wr_data', "16'h019a", 'gemIn', 1, 'bus', dataBus]
];

document.getElementById('names').innerHTML = signals.map(([name, , icon, exp], i) => {
  if (icon === 'group') return `<div class="row group"><button class="toggle" aria-label="Collapse ${name}"></button><svg><use href="#gemRed"/></svg><span class="name">${name}</span></div>`;
  const last = signals[i + 1] && signals[i + 1][2] === 'group' ? ' last' : '';
  const lead = exp ? `<button class="toggle plus" aria-label="Expand ${name}"></button>` : '<span class="gap"></span>';
  return `<div class="row leaf${last}${i === 2 ? ' sel' : ''}">${lead}<svg><use href="#${icon}"/></svg><span class="name">${name}</span></div>`;
}).join('');
document.getElementById('values').innerHTML = signals.map((s, i) => `<div class="row${i === 2 ? ' sel' : ''}">${s[1]}</div>`).join('');

function draw() {
  const plot = document.getElementById('plot'), ruler = document.getElementById('ruler'), top = document.getElementById('topStrip');
  const W = plot.clientWidth, k = (W - 7) / SPAN;
  const X = t => Math.round(4 + t * k);
  const rect = (x, y, w, h, c) => `<rect x="${x}" y="${y}" width="${Math.max(w, 0)}" height="${h}" class="${c}"/>`;
  const path = (d, c) => `<path d="${d}" class="${c}"/>`;
  const text = (x, y, s, c) => `<text x="${x}" y="${y}" class="${c}">${s}</text>`;
  let o = '<defs><pattern id="hatch" width="3" height="3" patternUnits="userSpaceOnUse"><rect width="3" height="3" fill="#000"/><rect width="2" height="3" fill="#80b880"/></pattern></defs>';
  for (let t = 2000; t < SPAN; t += 2000) o += path(`M${X(t) + .5} 0V2000`, 'gridline');
  const cx = X(CURSOR) - 1;
  let hits = '';

  signals.forEach(([name, , icon, , type, data], i) => {
    const y = 3 + 21 * i + Math.floor(i / 4), hi = y + 3, lo = y + 18;
    if (icon === 'group') {
      o += `<rect x="10" y="${hi}" width="${name.length * 7 + 12}" height="18"/>` + text(10, y + 15, `( ${name} )`, 'val');
    } else if (type === 'clk' || type === 'slow') {
      o += rect(X(0), hi, X(END) - X(0), 15, 'clk');
      if (type === 'slow') {
        let n = 0;
        for (let t = 498; t < END; t += 508) {
          o += `<rect x="${X(t)}" y="${hi}" width="1" height="15"/>`;
          if (n++ % 2) o += `<rect x="${X(t)}" y="${hi - 1}" width="1" height="16" fill="#006000"/>`;
        }
      }
      hits += rect(cx - 2, hi, 4, 15, 'hit');
    } else if (type === 'bit') {
      let d = `M${X(0) + .5} ${hi + 8}`;
      data.forEach(([t, v], j) => {
        const yy = (v ? hi : lo) + .5;
        d += (j ? `H${X(t) + .5}` : '') + `V${yy}`;
      });
      o += path(d + `H${X(END)}`, 'lg');
      const v = data.filter(p => p[0] <= CURSOR).pop()[1];
      hits += rect(cx - 2, v ? hi : lo, 4, 1, 'hit');
    } else if (type === 'full') {
      o += path(`M${X(0) + .5} ${hi + 8}V${lo + .5}H${X(END)}`, 'lg');
      o += rect(X(7704), hi, X(W_OFF) - X(7704), 15, 'clk');
      const m = X(7960);
      o += `<rect x="${m}" y="${hi - 1}" width="9" height="16" fill="#007000"/>` + rect(m + 4, hi, 1, 15, 'clk') + `<rect x="${m + 2}" y="${hi}" width="1" height="15"/><rect x="${m + 6}" y="${hi}" width="1" height="15"/>`;
      hits += rect(cx - 2, lo, 4, 1, 'hit');
    } else {
      data.forEach(([kind, a, b, v]) => {
        const x0 = X(a), x1 = X(b), w = x1 - x0;
        if (kind === 's') {
          o += rect(x0, hi - 1, w, 16, 'solid') + `<rect x="${x0}" y="${hi + 7}" width="${w}" height="1" fill="#204020"/>`;
        } else if (kind === 'h') {
          o += `<rect x="${x0}" y="${hi - 1}" width="${w}" height="16" fill="url(#hatch)"/>`;
          o += rect(x0, hi + 3, w, 1, 'solid') + rect(x0, hi + 11, w, 1, 'solid');
          for (let t = a === 498 ? 498 + 508 : 820 + 508 * Math.ceil((a - 820) / 508); t < b; t += 508) {
            o += rect(X(t), hi - 1, 2, 4, 'solid') + rect(X(t), hi + 11, 2, 4, 'solid') + `<rect x="${X(t)}" y="${hi + 4}" width="1" height="7"/>`;
          }
          if (CURSOR > a && CURSOR < b) hits += rect(cx - 2, hi - 1, 1, 16, 'hitBus') + rect(cx, hi + 3, 2, 9, 'hitBus');
        } else {
          const open = b === END;
          const topEnd = open ? `H${x1}` : `H${x1 - 2}l1 4`, lowEnd = open ? `H${x1}` : `H${x1 - 2}l1 -4`;
          o += path(`M${x0 + .5} ${hi + 4}l1 -4.500${topEnd}M${x0 + .5} ${hi + 3}v9l1 3${lowEnd}`, 'rail');
          if (v) o += `<rect x="${x0 + 3}" y="${hi + 1}" width="${v.length * 7}" height="13"/>` + text(x0 + (v.length > 6 ? 5 : 3), y + 15, v, 'val');
          if (v && CURSOR > a && CURSOR < b) hits += rect(cx - 2, hi - 1, 4, 1, 'hitBus') + rect(cx - 2, hi + 14, 4, 1, 'hitBus');
        }
      });
    }
  });
  plot.innerHTML = o + rect(cx - 2, 0, 4, 2000, 'curs') + hits;
  top.innerHTML = rect(cx - 2, 0, 4, 30, 'curs');

  let r = '';
  for (let t = 500, n = 1; t <= SPAN; t += 500, n++) r += path(`M${X(t) + .5} ${n % 5 ? 3 : 1}V9`, 'tick');
  r += `<svg x="3" y="0" width="${W - 7}" height="30">` + text(22, 24, '0 ns', 'lab first');
  for (let t = 5000; t <= SPAN; t += 5000) r += text(X(t) - 3, 24, t + ' ns', 'lab');
  r += '</svg>' + path(`M3 28.500H${W - 4}`, 'gridline') + rect(cx - 2, 0, 4, 28, 'curs');
  r += `<rect x="${cx - 44}.5" y="29.500" width="88" height="19" class="box"/>` + text(cx, 44, '12577.609 ns', 'boxText');
  ruler.innerHTML = r;
}
draw();
addEventListener('resize', draw);
```
